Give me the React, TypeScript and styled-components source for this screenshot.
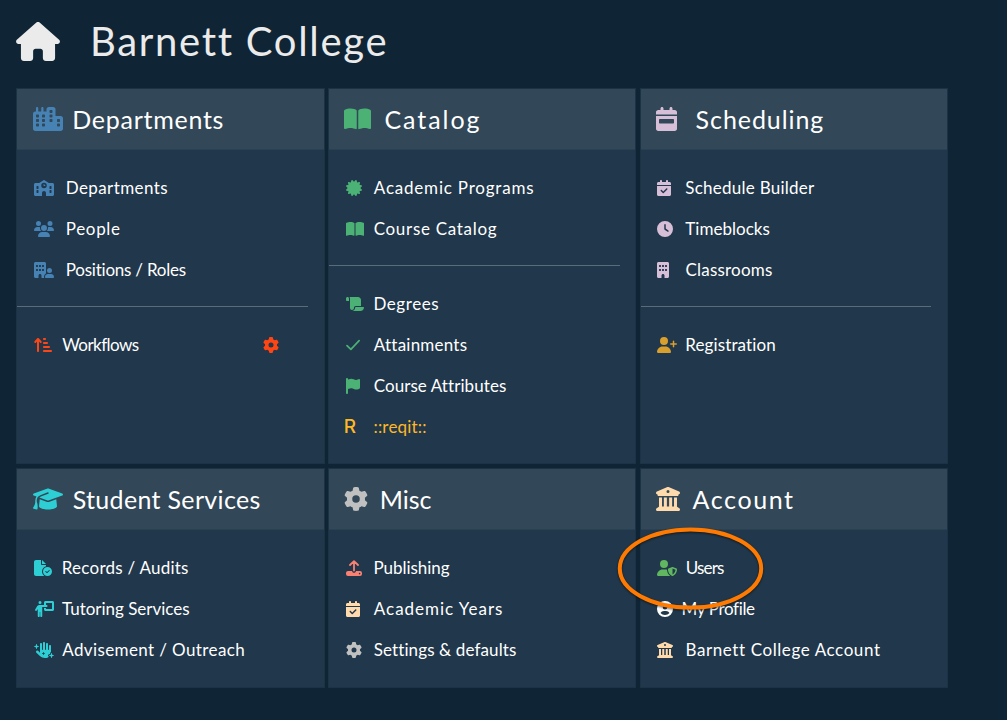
import React from "react";
import styled, { createGlobalStyle } from "styled-components";
import {
  FaHouse, FaCity, FaSchool, FaUsers, FaBuildingUser, FaArrowUpShortWide, FaGear, FaBookOpen,
  FaCertificate, FaScroll, FaFlag, FaCalendarWeek, FaCalendarCheck, FaClock, FaBuilding, FaUserPlus,
  FaGraduationCap, FaFileCircleCheck, FaPersonChalkboard, FaHandSparkles, FaBuildingColumns,
  FaUserShield, FaCircleUser,
} from "react-icons/fa6";

const GlobalStyle = createGlobalStyle`
  *, *::before, *::after { box-sizing: border-box; }
  body {
    margin: 0;
    background: #0f2535;
    color: #ffffff;
    font-family: Lato, "Liberation Sans", sans-serif;
    overflow: hidden;
  }
`;

const Page = styled.div`
  height: 720px;
  overflow: hidden;
`;

const Banner = styled.header`
  display: flex;
  align-items: center;
  height: 88px;
  padding: 0 0 5px 16px;
  color: #ebebeb;
`;

const HomeIcon = styled.span`
  display: flex;
  width: 74px;
  svg { width: 44px; height: 39px; }
`;

const Title = styled.h1`
  margin: 0 0 2px;
  font-size: 40px;
  font-weight: 400;
  line-height: 48px;
  letter-spacing: 1.7px;
  white-space: nowrap;
`;

const Grid = styled.main`
  display: grid;
  grid-template-columns: repeat(3, 308.33px);
  grid-template-rows: 376px 220px;
  gap: 4px 3.33px;
  padding-left: 16.3px;
`;

const Card = styled.section`
  border: 1px solid #1b3345;
  background: #21374b;
`;

const CardHeader = styled.div<{ $pad: number }>`
  display: flex;
  align-items: center;
  height: 61px;
  padding-left: ${(p) => p.$pad}px;
  background: #324757;
  border-bottom: 1px solid #2a4151;
`;

const IconSlot = styled.span<{ $slot: number; $w: number; $h: number; $color: string }>`
  display: flex;
  flex: none;
  align-items: center;
  width: ${(p) => p.$slot}px;
  color: ${(p) => p.$color};
  svg { width: ${(p) => p.$w}px; height: ${(p) => p.$h}px; }
`;

const CardTitle = styled.h2<{ $ls: number }>`
  margin: 0;
  font-size: 25px;
  font-weight: 400;
  line-height: 30px;
  letter-spacing: ${(p) => p.$ls}px;
  white-space: nowrap;
`;

const CardBody = styled.div`
  padding-top: 17px;
`;

const ItemRow = styled.div`
  position: relative;
  display: flex;
  align-items: center;
  height: 41px;
  padding-left: 16.7px;
`;

const ItemLabel = styled.span<{ $ls: number; $color?: string }>`
  font-size: 17px;
  line-height: 22px;
  letter-spacing: ${(p) => p.$ls}px;
  color: ${(p) => p.$color ?? "#ffffff"};
  white-space: nowrap;
`;

const Divider = styled.hr`
  height: 1px;
  margin: 16px 15.5px 17px 0;
  border: 0;
  background: #5a6b79;
`;

const Trailing = styled.span`
  display: flex;
  margin-left: auto;
  margin-right: 44.6px;
  color: #ff4513;
  svg { width: 16px; height: 16px; }
`;

const LetterIcon = styled.span`
  margin-left: -2px;
  font: 500 19px/20px Inter, sans-serif;
`;

const Highlight = styled.svg`
  position: absolute;
  left: -26.6px;
  top: -23.5px;
  width: 152px;
  height: 90px;
  z-index: 2;
  pointer-events: none;
  filter: drop-shadow(0 1px 1px rgba(0, 0, 0, 0.55));
`;

const CheckIcon = () => (
  <svg viewBox="0 0 14 16" fill="none" stroke="currentColor" strokeWidth="1.7" strokeLinecap="round" strokeLinejoin="round">
    <path d="M1 8.6 L4.9 12.4 L13.1 3.6" />
  </svg>
);

const UploadIcon = () => (
  <svg viewBox="0 0 16 16" fill="none">
    <path d="M8 1.2V10.6M4 5L8 1.1L12 5" stroke="currentColor" strokeWidth="1.8" strokeLinecap="round" strokeLinejoin="round" />
    <path
      d="M2 11H6.1V10.9C6.1 12 7 12.7 8 12.7S9.9 12 9.9 10.9V11H14A2 2 0 0 1 16 13V14A2 2 0 0 1 14 16H2A2 2 0 0 1 0 14V13A2 2 0 0 1 2 11ZM13.6 12.8A0.8 0.8 0 1 0 13.6 14.4A0.8 0.8 0 1 0 13.6 12.8Z"
      fill="currentColor"
      fillRule="evenodd"
    />
  </svg>
);

const RLetter = () => <LetterIcon>R</LetterIcon>;

type Item = {
  icon: React.ComponentType;
  w: number;
  color: string;
  slot: number;
  label: string;
  ls: number;
  labelColor?: string;
  gear?: boolean;
  ringed?: boolean;
};

type CardData = {
  title: string;
  ls: number;
  icon: React.ComponentType;
  w: number;
  pad: number;
  slot: number;
  color: string;
  groups: Item[][];
};

const blue = "#4682b4";
const green = "#4bb174";
const mauve = "#d8bfd8";
const teal = "#2ecfd4";
const sand = "#ffdaad";

const cards: CardData[] = [
  {
    title: "Departments", ls: 0.73, icon: FaCity, w: 30, pad: 15.7, slot: 39.3, color: blue,
    groups: [
      [
        { icon: FaSchool, w: 20, color: blue, slot: 31.8, label: "Departments", ls: 0.39 },
        { icon: FaUsers, w: 20, color: blue, slot: 31.8, label: "People", ls: 0.67 },
        { icon: FaBuildingUser, w: 20, color: blue, slot: 31.8, label: "Positions / Roles", ls: -0.23 },
      ],
      [{ icon: FaArrowUpShortWide, w: 18, color: "#ff4513", slot: 28.3, label: "Workflows", ls: -0.55, gear: true }],
    ],
  },
  {
    title: "Catalog", ls: 1.95, icon: FaBookOpen, w: 27, pad: 15.5, slot: 40, color: green,
    groups: [
      [
        { icon: FaCertificate, w: 16, color: green, slot: 28.2, label: "Academic Programs", ls: 0.79 },
        { icon: FaBookOpen, w: 18, color: green, slot: 28, label: "Course Catalog", ls: 0.7 },
      ],
      [
        { icon: FaScroll, w: 18, color: green, slot: 27.8, label: "Degrees", ls: 0.56 },
        { icon: CheckIcon, w: 14, color: green, slot: 28.2, label: "Attainments", ls: 0.22 },
        { icon: FaFlag, w: 14, color: green, slot: 28, label: "Course Attributes", ls: 0.08 },
        { icon: RLetter, w: 14, color: "#fdb827", slot: 27.8, label: "::reqit::", ls: 0.2, labelColor: "#fdb827" },
      ],
    ],
  },
  {
    title: "Scheduling", ls: 0.93, icon: FaCalendarWeek, w: 21, pad: 15.5, slot: 39.5, color: mauve,
    groups: [
      [
        { icon: FaCalendarCheck, w: 14, color: mauve, slot: 28, label: "Schedule Builder", ls: 0.25 },
        { icon: FaClock, w: 16, color: mauve, slot: 28, label: "Timeblocks", ls: 0.03 },
        { icon: FaBuilding, w: 12, color: mauve, slot: 28.2, label: "Classrooms", ls: 0.2 },
      ],
      [{ icon: FaUserPlus, w: 20, color: "#daa02e", slot: 28, label: "Registration", ls: 0.11 }],
    ],
  },
  {
    title: "Student Services", ls: 0.33, icon: FaGraduationCap, w: 30, pad: 15.7, slot: 39.7, color: teal,
    groups: [
      [
        { icon: FaFileCircleCheck, w: 18, color: teal, slot: 27.8, label: "Records / Audits", ls: 0.24 },
        { icon: FaPersonChalkboard, w: 20, color: teal, slot: 28, label: "Tutoring Services", ls: -0.02 },
        { icon: FaHandSparkles, w: 20, color: teal, slot: 28.2, label: "Advisement / Outreach", ls: 0.39 },
      ],
    ],
  },
  {
    title: "Misc", ls: 0, icon: FaGear, w: 24, pad: 15.5, slot: 35.3, color: "#c0c0c0",
    groups: [
      [
        { icon: UploadIcon, w: 16, color: "#fa8072", slot: 27.8, label: "Publishing", ls: -0.04 },
        { icon: FaCalendarCheck, w: 14, color: sand, slot: 28.2, label: "Academic Years", ls: 0.98 },
        { icon: FaGear, w: 16, color: "#c0c0c0", slot: 28, label: "Settings & defaults", ls: 0.12 },
      ],
    ],
  },
  {
    title: "Account", ls: 1.6, icon: FaBuildingColumns, w: 24, pad: 15.5, slot: 36.5, color: sand,
    groups: [
      [
        { icon: FaUserShield, w: 20, color: "#60b760", slot: 28.4, label: "Users", ls: -0.81, ringed: true },
        { icon: FaCircleUser, w: 16, color: "#ffffff", slot: 24.2, label: "My Profile", ls: -0.34 },
        { icon: FaBuildingColumns, w: 16, color: sand, slot: 28.2, label: "Barnett College Account", ls: 0.59 },
      ],
    ],
  },
];

function MenuItem({ item }: { item: Item }) {
  const Icon = item.icon;
  return (
    <ItemRow>
      <IconSlot $slot={item.slot} $w={item.w} $h={16} $color={item.color}><Icon /></IconSlot>
      <ItemLabel $ls={item.ls} $color={item.labelColor}>{item.label}</ItemLabel>
      {item.gear && <Trailing><FaGear /></Trailing>}
      {item.ringed && (
        <Highlight viewBox="0 0 152 90">
          <ellipse cx="76.5" cy="44.5" rx="70.7" ry="39.1" fill="none" stroke="#ff7a00" strokeWidth="4" />
        </Highlight>
      )}
    </ItemRow>
  );
}

export default function App() {
  return (
    <Page>
      <GlobalStyle />
      <Banner>
        <HomeIcon><FaHouse /></HomeIcon>
        <Title>Barnett College</Title>
      </Banner>
      <Grid>
        {cards.map((card) => {
          const Icon = card.icon;
          return (
            <Card key={card.title}>
              <CardHeader $pad={card.pad}>
                <IconSlot $slot={card.slot} $w={card.w} $h={24} $color={card.color}><Icon /></IconSlot>
                <CardTitle $ls={card.ls}>{card.title}</CardTitle>
              </CardHeader>
              <CardBody>
                {card.groups.map((group, g) => (
                  <React.Fragment key={g}>
                    {g > 0 && <Divider />}
                    {group.map((item) => <MenuItem key={item.label} item={item} />)}
                  </React.Fragment>
                ))}
              </CardBody>
            </Card>
          );
        })}
      </Grid>
    </Page>
  );
}
